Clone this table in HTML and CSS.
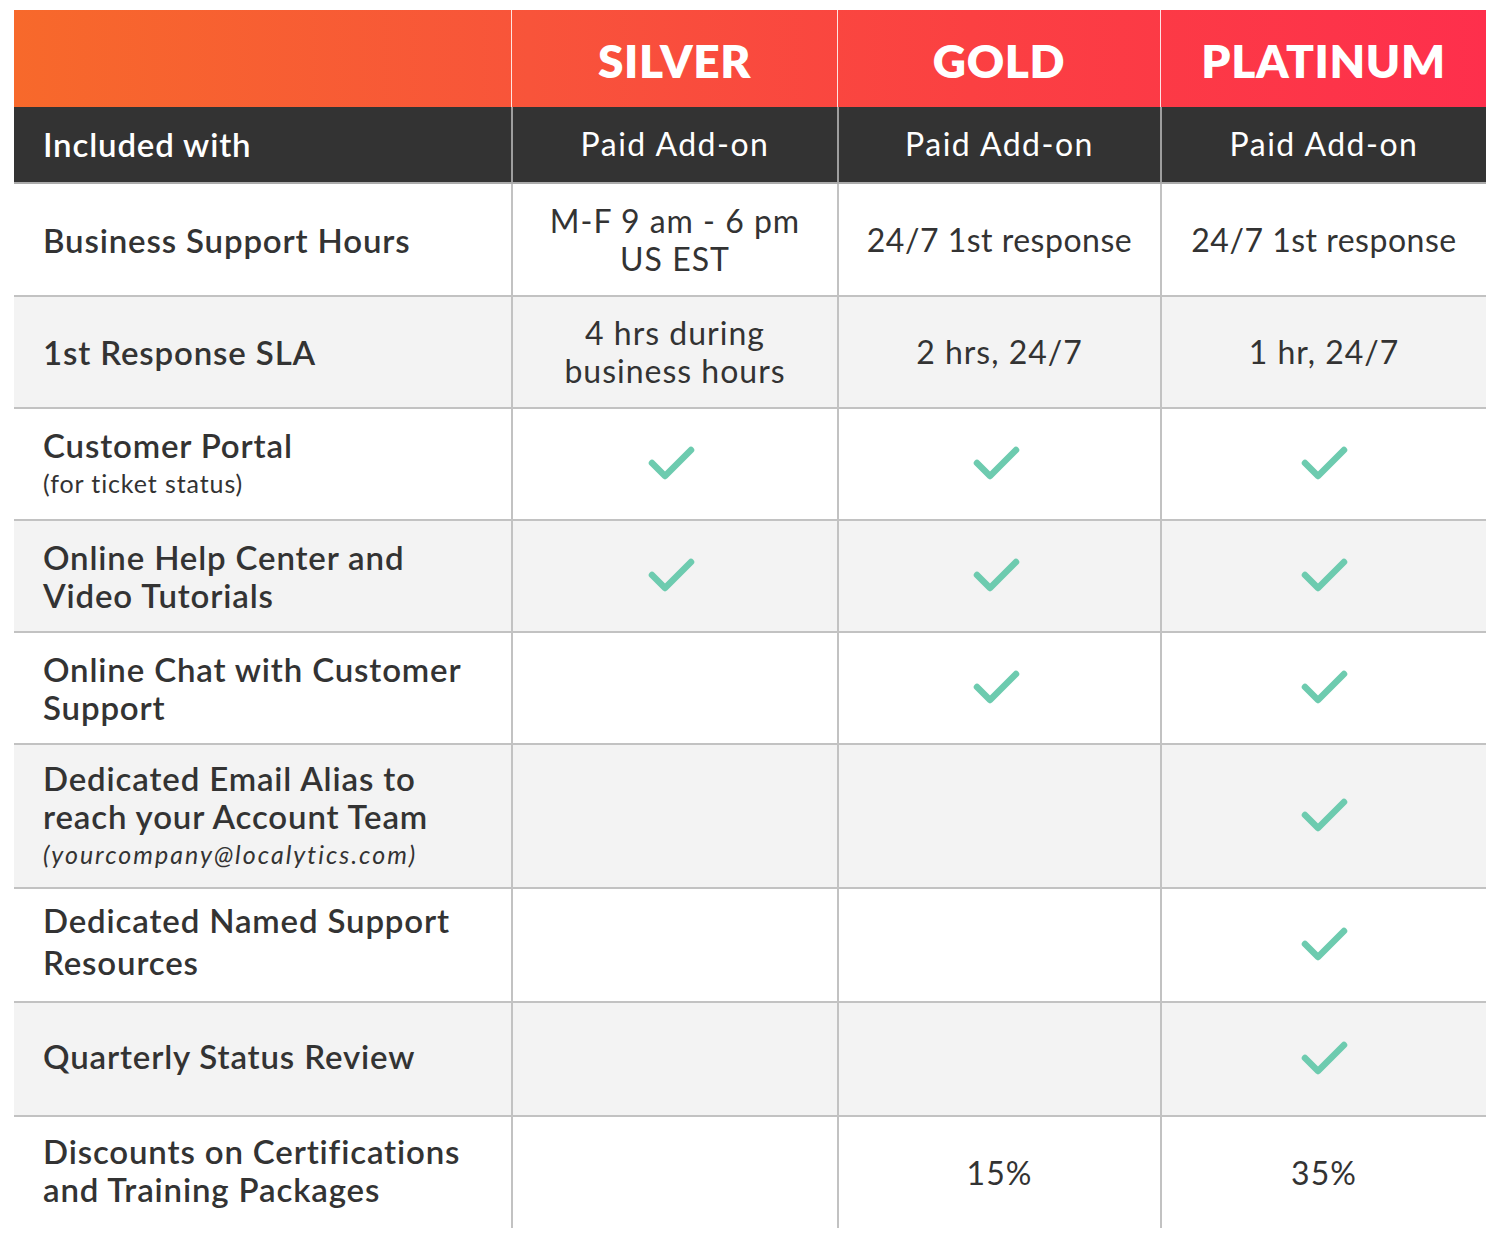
FILE: index.html
```html
<!DOCTYPE html>
<html>
<head>
<meta charset="utf-8">
<link rel="stylesheet" href="styles.css">
</head>
<body>
<svg width="0" height="0" class="defs">
  <defs>
    <symbol id="chk" viewBox="0 0 50 40">
      <path d="M6 19 L19 32 L45 6" fill="none" stroke="#6dcbaf" stroke-width="6.5" stroke-linecap="round" stroke-linejoin="round"/>
    </symbol>
  </defs>
</svg>
<div class="table">
  <div class="row head">
    <div class="cell"></div>
    <div class="cell tier">SILVER</div>
    <div class="cell tier">GOLD</div>
    <div class="cell tier">PLATINUM</div>
  </div>
  <div class="row sub">
    <div class="cell label">Included with</div>
    <div class="cell">Paid Add-on</div>
    <div class="cell">Paid Add-on</div>
    <div class="cell">Paid Add-on</div>
  </div>
  <div class="row body first">
    <div class="cell label">Business Support Hours</div>
    <div class="cell">M-F 9 am - 6 pm<br>US EST</div>
    <div class="cell tight">24/7 1st response</div>
    <div class="cell tight">24/7 1st response</div>
  </div>
  <div class="row body alt">
    <div class="cell label">1st Response SLA</div>
    <div class="cell">4 hrs during<br>business hours</div>
    <div class="cell">2 hrs, 24/7</div>
    <div class="cell">1 hr, 24/7</div>
  </div>
  <div class="row body">
    <div class="cell label"><div>Customer Portal<span class="note">(for ticket status)</span></div></div>
    <div class="cell shifted"><svg class="check"><use href="#chk"/></svg></div>
    <div class="cell shifted"><svg class="check"><use href="#chk"/></svg></div>
    <div class="cell"><svg class="check"><use href="#chk"/></svg></div>
  </div>
  <div class="row body alt">
    <div class="cell label">Online Help Center and<br>Video Tutorials</div>
    <div class="cell shifted"><svg class="check"><use href="#chk"/></svg></div>
    <div class="cell shifted"><svg class="check"><use href="#chk"/></svg></div>
    <div class="cell"><svg class="check"><use href="#chk"/></svg></div>
  </div>
  <div class="row body">
    <div class="cell label">Online Chat with Customer<br>Support</div>
    <div class="cell"></div>
    <div class="cell shifted"><svg class="check"><use href="#chk"/></svg></div>
    <div class="cell"><svg class="check"><use href="#chk"/></svg></div>
  </div>
  <div class="row body alt tall">
    <div class="cell label"><div>Dedicated Email Alias to<br>reach your Account Team<span class="note em">(yourcompany@localytics.com)</span></div></div>
    <div class="cell"></div>
    <div class="cell"></div>
    <div class="cell"><svg class="check"><use href="#chk"/></svg></div>
  </div>
  <div class="row body mid">
    <div class="cell label loose">Dedicated Named Support<br>Resources</div>
    <div class="cell"></div>
    <div class="cell"></div>
    <div class="cell"><svg class="check"><use href="#chk"/></svg></div>
  </div>
  <div class="row body alt mid">
    <div class="cell label raised">Quarterly Status Review</div>
    <div class="cell"></div>
    <div class="cell"></div>
    <div class="cell"><svg class="check"><use href="#chk"/></svg></div>
  </div>
  <div class="row body last">
    <div class="cell label raised">Discounts on Certifications<br>and Training Packages</div>
    <div class="cell"></div>
    <div class="cell">15%</div>
    <div class="cell">35%</div>
  </div>
</div>
</body>
</html>
```

FILE: styles.css
```css
html, body {
  margin: 0;
  padding: 0;
  background: #ffffff;
}
body {
  padding: 10px 0 0 14px;
  font-family: "Lato", "Open Sans", sans-serif;
  color: #333333;
}
.defs {
  position: absolute;
}
.table {
  width: 1472px;
}
.row {
  display: grid;
  grid-template-columns: 497px 326px 323px 326px;
  box-sizing: border-box;
}
.cell {
  display: flex;
  align-items: center;
  justify-content: center;
  text-align: center;
  box-sizing: border-box;
  font-size: 32px;
  line-height: 38px;
  letter-spacing: 1px;
}
.cell.tight {
  letter-spacing: 0.5px;
}
.cell + .cell {
  border-left: 2px solid #c2c2c2;
}
.cell.label {
  justify-content: flex-start;
  text-align: left;
  padding-left: 29px;
  font-weight: 600;
  font-size: 33px;
  letter-spacing: 0.85px;
}
.cell.label.loose {
  line-height: 42px;
  padding-bottom: 8px;
}
.cell.label.raised {
  padding-bottom: 6px;
}
.cell.shifted .check {
  margin-right: 8px;
}
.head {
  height: 97px;
  background: linear-gradient(90deg, #f7692b 0%, #f8543a 35%, #fb4042 65%, #fe2f4c 100%);
}
.head .cell + .cell {
  border-left: 1px solid rgba(255,255,255,0.85);
}
.tier {
  color: #ffffff;
  font-weight: 800;
  font-size: 46px;
  letter-spacing: 0.6px;
  padding-top: 4px;
}
.sub {
  height: 77px;
  background: #333333;
  border-bottom: 2px solid #ababab;
}
.sub .cell {
  color: #ffffff;
  font-weight: 400;
  letter-spacing: 1.5px;
  padding-bottom: 2px;
}
.sub .cell.label {
  font-weight: 600;
  letter-spacing: 0.85px;
}
.sub .cell + .cell {
  border-left: 2px solid #9e9e9e;
}
.body {
  height: 112px;
  border-top: 2px solid #c2c2c2;
  background: #ffffff;
}
.body.first {
  height: 111px;
  border-top: none;
}
.body.alt {
  background: #f3f3f3;
}
.body.tall {
  height: 144px;
}
.body.mid {
  height: 114px;
}
.body.last {
  height: 113px;
}
.note {
  display: block;
  font-size: 25px;
  font-weight: 400;
  line-height: 38px;
  letter-spacing: 0.9px;
}
.note.em {
  font-style: italic;
  letter-spacing: 2px;
}
.check {
  width: 50px;
  height: 40px;
}
```
